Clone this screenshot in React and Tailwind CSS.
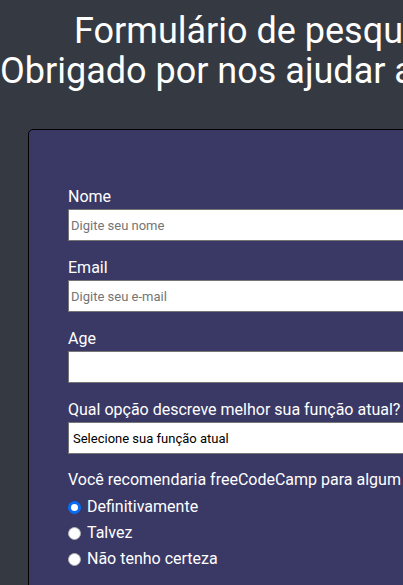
import React from 'react';

const font = { fontFamily: 'Roboto, "Noto Sans", sans-serif' };

const Field = ({ id, label, type = 'text', placeholder }) => (
    <div className="mb-[17px]">
        <label htmlFor={id} className="block text-[16px] leading-[19px] text-white mb-[3px]">{label}</label>
        <input
            id={id}
            type={type}
            placeholder={placeholder}
            className="block w-full h-[32px] px-[2px] bg-white border border-[#767676] text-[13px] text-black placeholder:text-[#757575] outline-none"
        />
    </div>
);

const options = ['Definitivamente', 'Talvez', 'Não tenho certeza'];

export default function App() {
    return (
        <div className="w-full min-h-screen overflow-hidden bg-[#353a42]" style={font}>
            <div className="w-[524px] pt-[11px] pb-[40px]">
                {/* Cabeçalho */}
                <header className="text-center text-white text-[36px] leading-[40px]">
                    <h1 id="title">Formulário de pesquisa</h1>
                    <p id="description" className="whitespace-nowrap">Obrigado por nos ajudar a melhorar a plataforma</p>
                </header>

                {/* Formulário */}
                <form id="survey-form" className="mt-[38px] mx-[28px] bg-[#3a3965] border border-black rounded-[5px] pt-[57px] pb-[40px] px-[39px]">
                    <Field id="name" label="Nome" placeholder="Digite seu nome" />
                    <Field id="email" label="Email" type="email" placeholder="Digite seu e-mail" />
                    <Field id="number" label="Age" type="number" />

                    <div className="mb-[16px]">
                        <label htmlFor="dropdown" className="block text-[16px] leading-[19px] text-white mb-[3px]">Qual opção descreve melhor sua função atual?</label>
                        <select id="dropdown" className="block w-full h-[32px] px-0 bg-white border border-[#767676] text-[13px] text-black outline-none">
                            <option>Selecione sua função atual</option>
                        </select>
                    </div>

                    <div>
                        <p className="text-[16px] leading-[19px] text-white whitespace-nowrap mb-[5px]">Você recomendaria freeCodeCamp para algum amigo?</p>
                        {options.map((opt, i) => (
                            <label key={opt} className="flex items-center gap-[6px] h-[26px] text-[16px] text-white">
                                <input
                                    type="radio"
                                    name="recommend"
                                    defaultChecked={i === 0}
                                    className="appearance-none w-[13px] h-[13px] rounded-full bg-white border border-[#b0b0b0] checked:border-[3px] checked:border-[#0a6cf5] m-0"
                                />
                                {opt}
                            </label>
                        ))}
                    </div>
                </form>
            </div>
        </div>
    );
}
